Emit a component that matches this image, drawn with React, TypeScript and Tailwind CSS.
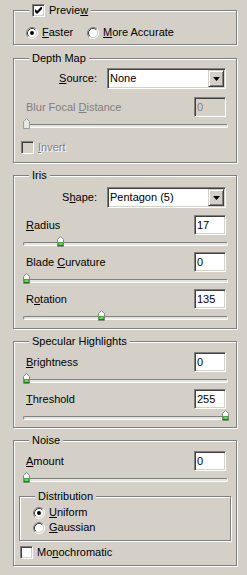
import React from "react";

const sunken =
  "border border-t-[#808080] border-l-[#808080] border-b-white border-r-white shadow-[inset_1px_1px_0_#404040,inset_-1px_-1px_0_#d4d0c8]";
const raised =
  "border border-t-[#d4d0c8] border-l-[#d4d0c8] border-b-[#404040] border-r-[#404040] shadow-[inset_1px_1px_0_#ffffff,inset_-1px_-1px_0_#808080]";

function U({ children }: { children: React.ReactNode }) {
  return <span className="underline decoration-1 underline-offset-[1px]">{children}</span>;
}

function Group({
  title,
  className = "",
  children,
}: {
  title: React.ReactNode;
  className?: string;
  children: React.ReactNode;
}) {
  return (
    <div
      className={`relative border border-[#808080] shadow-[inset_1px_1px_0_#ffffff,1px_1px_0_#ffffff] ${className}`}
    >
      <div className="absolute -top-[7px] left-[15px] h-[13px] px-[3px] bg-[#d4d0c8] flex items-center gap-[4px] leading-[13px] whitespace-nowrap">
        {title}
      </div>
      {children}
    </div>
  );
}

function Check({ checked = false, disabled = false }: { checked?: boolean; disabled?: boolean }) {
  return (
    <span
      className={`w-[13px] h-[13px] shrink-0 flex items-center justify-center ${sunken} ${
        disabled ? "bg-[#d4d0c8]" : "bg-white"
      }`}
    >
      {checked && (
        <svg width="7" height="7" viewBox="0 0 7 7">
          <path d="M0 2 L2 4 L7 -1 L7 2 L2 7 L0 5 Z" fill="#000" />
        </svg>
      )}
    </span>
  );
}

function Radio({ checked = false }: { checked?: boolean }) {
  return (
    <svg width="12" height="12" viewBox="0 0 12 12" className="shrink-0">
      <circle cx="6" cy="6" r="4.5" fill="#ffffff" />
      <path d="M2.11 9.89 A5.5 5.5 0 0 1 9.89 2.11" fill="none" stroke="#808080" />
      <path d="M9.89 2.11 A5.5 5.5 0 0 1 2.11 9.89" fill="none" stroke="#ffffff" />
      <path d="M2.82 9.18 A4.5 4.5 0 0 1 9.18 2.82" fill="none" stroke="#404040" />
      <path d="M9.18 2.82 A4.5 4.5 0 0 1 2.82 9.18" fill="none" stroke="#d4d0c8" />
      {checked && <circle cx="6" cy="6" r="2" fill="#000" />}
    </svg>
  );
}

function Field({ value, disabled = false }: { value: string; disabled?: boolean }) {
  return (
    <div
      className={`w-[32px] h-[20px] flex items-center pl-[2px] ${sunken} ${
        disabled ? "bg-[#d4d0c8] text-[#808080]" : "bg-white text-black"
      }`}
    >
      {value}
    </div>
  );
}

function Select({ value }: { value: string }) {
  return (
    <div className={`w-[119px] h-[21px] bg-white flex items-center ${sunken}`}>
      <span className="flex-1 pl-[2px]">{value}</span>
      <div className={`w-[16px] h-[17px] mr-[1px] bg-[#d4d0c8] flex items-center justify-center ${raised}`}>
        <svg width="7" height="4" viewBox="0 0 7 4">
          <path d="M0 0 L7 0 L3.5 4 Z" fill="#000" />
        </svg>
      </div>
    </div>
  );
}

function Slider({ frac, disabled = false }: { frac: number; disabled?: boolean }) {
  return (
    <div className="relative h-[17px]">
      <div className="absolute left-0 right-[1px] top-[7px] h-[4px] rounded-[2px] border-t border-l border-t-[#808080] border-l-[#808080] border-b border-r border-b-white border-r-white bg-[#e6e4de]" />
      <svg
        className="absolute top-[1px]"
        style={{ left: Math.round(frac * 199) }}
        width="7"
        height="11"
        viewBox="0 0 7 11"
      >
        <path
          d="M3.5 0.5 L6.5 3.5 L6.5 10.5 L0.5 10.5 L0.5 3.5 Z"
          fill={disabled ? "#e8e6e0" : "#f8f8f8"}
          stroke={disabled ? "#9c9c9c" : "#7c8c7c"}
        />
        {!disabled && <rect x="1" y="6" width="5" height="4" fill="#3cae3c" />}
        {!disabled && <rect x="2" y="7" width="3" height="2" fill="#6fd06f" />}
        {!disabled && <rect x="1" y="9" width="5" height="1" fill="#1f7a1f" />}
      </svg>
    </div>
  );
}

function ValueRow({
  label,
  value,
  disabled = false,
}: {
  label: React.ReactNode;
  value: string;
  disabled?: boolean;
}) {
  return (
    <div className="h-[20px] flex items-center justify-between px-[3px]">
      <span className={disabled ? "text-[#808080]" : ""}>{label}</span>
      <Field value={value} disabled={disabled} />
    </div>
  );
}

export default function App() {
  return (
    <div className="w-[247px] h-[575px] bg-[#d4d0c8] pt-[10px] pl-[13px] text-[11px] leading-[13px] text-black font-['Liberation_Sans',Arial,sans-serif] overflow-hidden">
      <div className="w-[224px] flex flex-col gap-[12px]">
        {/* Preview */}
        <Group
          className="h-[35px] pt-[15px] pl-[9px] pr-[7px] mb-[1px]"
          title={
            <>
              <Check checked />
              <span>
                Previe<U>w</U>
              </span>
            </>
          }
        >
          <div className="h-[13px] flex items-center px-[3px]">
            <div className="w-[61px] flex items-center gap-[4px]">
              <Radio checked />
              <span>
                <U>F</U>aster
              </span>
            </div>
            <div className="flex items-center gap-[4px]">
              <Radio />
              <span>
                <U>M</U>ore Accurate
              </span>
            </div>
          </div>
        </Group>

        {/* Depth Map */}
        <Group title="Depth Map" className="pt-[9px] pb-[8px] pl-[9px] pr-[7px]">
          <div className="h-[21px] flex items-center justify-end gap-[10px] pr-[3px]">
            <span>
              <U>S</U>ource:
            </span>
            <Select value="None" />
          </div>
          <div className="mt-[8px]">
            <ValueRow
              disabled
              label={
                <>
                  Blur Focal <U>D</U>istance
                </>
              }
              value="0"
            />
          </div>
          <Slider frac={0} disabled />
          <div className="mt-[7px] h-[13px] flex items-center gap-[4px] -ml-[2px]">
            <Check disabled />
            <span className="text-[#808080] [text-shadow:1px_1px_0_#ffffff]">
              <U>I</U>nvert
            </span>
          </div>
        </Group>

        {/* Iris */}
        <Group title="Iris" className="pt-[11px] pb-[2px] pl-[9px] pr-[7px]">
          <div className="h-[21px] flex items-center justify-end gap-[10px] pr-[3px]">
            <span>
              S<U>h</U>ape:
            </span>
            <Select value="Pentagon (5)" />
          </div>
          <div className="mt-[7px]">
            <ValueRow
              label={
                <>
                  <U>R</U>adius
                </>
              }
              value="17"
            />
            <Slider frac={0.17} />
            <ValueRow
              label={
                <>
                  Blade <U>C</U>urvature
                </>
              }
              value="0"
            />
            <Slider frac={0} />
            <ValueRow
              label={
                <>
                  R<U>o</U>tation
                </>
              }
              value="135"
            />
            <Slider frac={135 / 360} />
          </div>
        </Group>

        {/* Specular Highlights */}
        <Group title="Specular Highlights" className="pt-[10px] pb-[1px] pl-[9px] pr-[7px]">
          <ValueRow
            label={
              <>
                <U>B</U>rightness
              </>
            }
            value="0"
          />
          <Slider frac={0} />
          <ValueRow
            label={
              <>
                <U>T</U>hreshold
              </>
            }
            value="255"
          />
          <Slider frac={1} />
        </Group>

        {/* Noise */}
        <Group title="Noise" className="pt-[10px] pb-[6px] pl-[9px] pr-[7px]">
          <ValueRow
            label={
              <>
                <U>A</U>mount
              </>
            }
            value="0"
          />
          <Slider frac={0} />
          <div className="mt-[8px] -ml-[4px] -mr-[2px]">
            <Group title="Distribution" className="h-[45px] pt-[9px] pl-[13px] flex flex-col gap-[2px]">
              <div className="h-[13px] flex items-center gap-[4px]">
                <Radio checked />
                <span>
                  <U>U</U>niform
                </span>
              </div>
              <div className="h-[13px] flex items-center gap-[4px]">
                <Radio />
                <span>
                  <U>G</U>aussian
                </span>
              </div>
            </Group>
          </div>
          <div className="mt-[5px] h-[13px] flex items-center gap-[4px] -ml-[3px]">
            <Check />
            <span>
              Mo<U>n</U>ochromatic
            </span>
          </div>
        </Group>
      </div>
    </div>
  );
}
